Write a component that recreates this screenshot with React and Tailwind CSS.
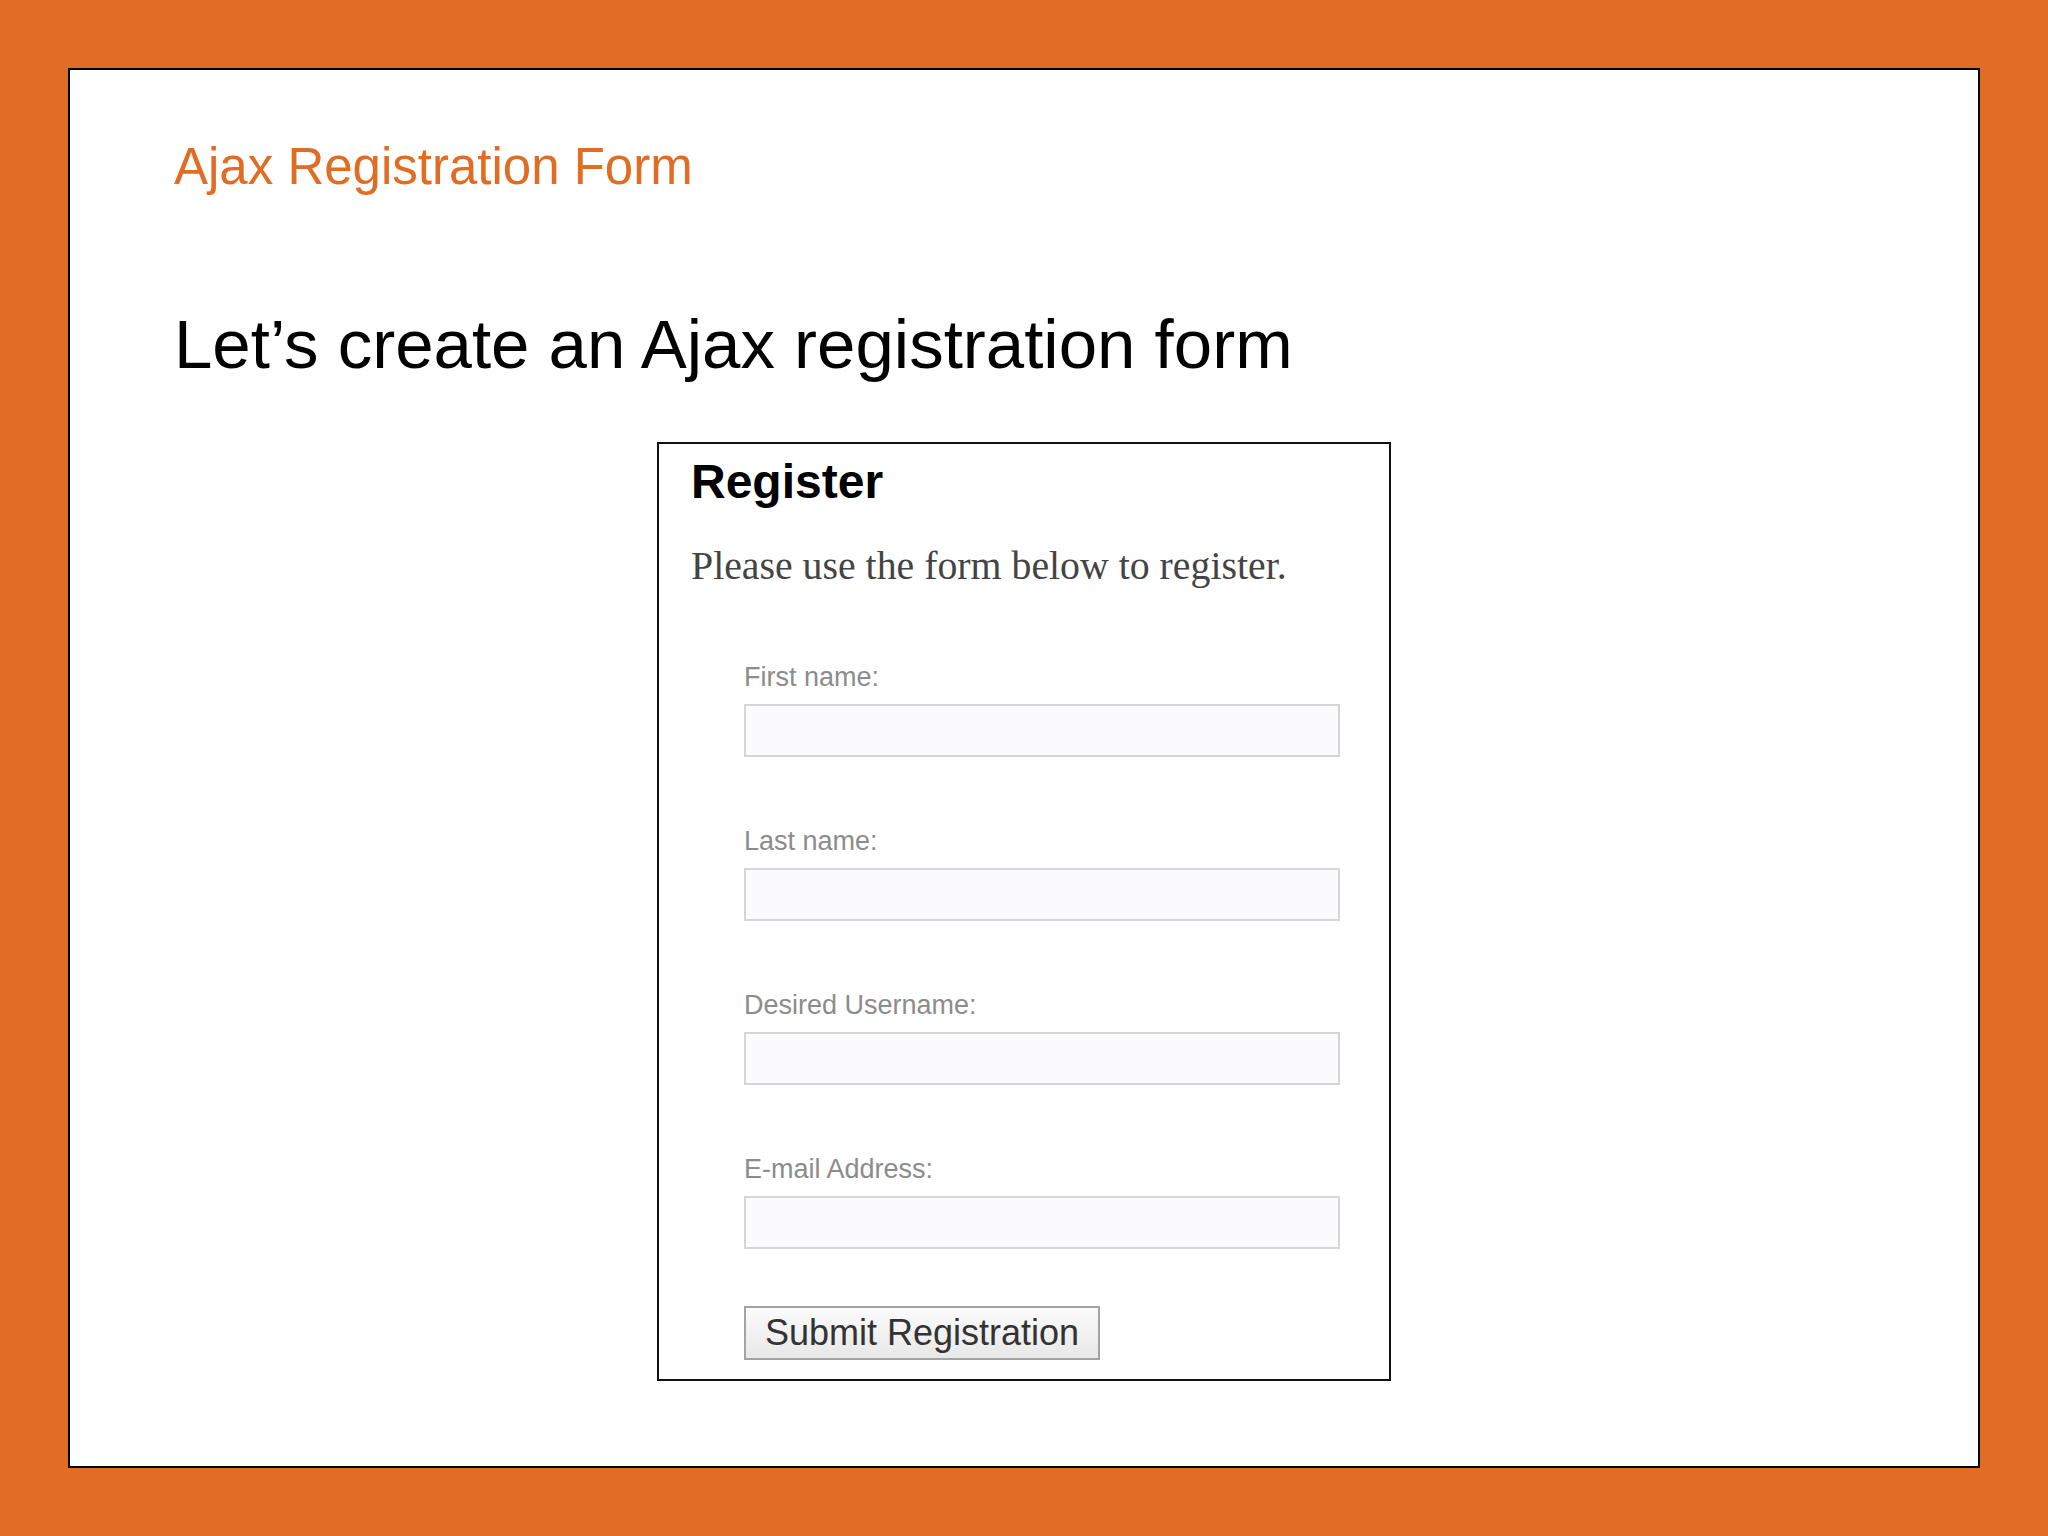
export default function App() {
  const fields = ["First name:", "Last name:", "Desired Username:", "E-mail Address:"];

  return (
    <div className="w-[2048px] h-[1536px] bg-[#e06d23] p-[68px]" style={{ fontFamily: '"Liberation Sans", Arial, sans-serif' }}>
      <div className="h-[1400px] bg-white border-2 border-black pl-[104px] pr-[104px] pt-[71px]">
        <h1 className="text-[51px] leading-none text-[#e06d23]">Ajax Registration Form</h1>
        <h2 className="mt-[118px] text-[69px] leading-none text-black">Let’s create an Ajax registration form</h2>

        <div className="mt-[63px] flex justify-center -ml-[104px] -mr-[104px]">
          <div className="w-[734px] h-[939px] border-2 border-[#111] pt-[14px] pl-[32px]">
            <h3 className="text-[48px] leading-none font-bold text-black">Register</h3>
            <p
              className="mt-[41px] text-[39.8px] leading-none text-[#444]"
              style={{ fontFamily: '"Liberation Serif", Georgia, serif' }}
            >
              Please use the form below to register.
            </p>

            <form className="mt-[77px] pl-[53px] flex flex-col">
              {fields.map((label, i) => (
                <div key={label} className={i === 0 ? "flex flex-col" : "flex flex-col mt-[71px]"}>
                  <label className="text-[27px] leading-none text-[#8c8c8c]">{label}</label>
                  <input
                    type="text"
                    className="mt-[13px] w-[596px] h-[53px] border-2 border-[#d6d6d6] bg-[#fbfafc] outline-none"
                  />
                </div>
              ))}
              <div className="mt-[57px]">
                <button
                  type="button"
                  className="w-[356px] h-[54px] border-2 border-[#a3a3a3] bg-gradient-to-b from-[#fbfbfb] to-[#e8e8e8] text-[36px] leading-none text-[#333] text-center"
                >
                  Submit Registration
                </button>
              </div>
            </form>
          </div>
        </div>
      </div>
    </div>
  );
}
